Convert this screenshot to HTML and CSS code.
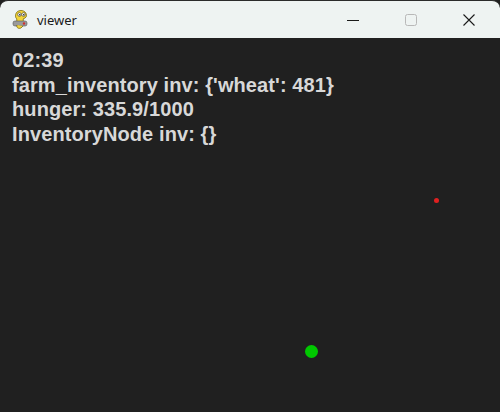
FILE: index.html
```html
<!DOCTYPE html>
<html>
<head>
<meta charset="utf-8">
<link rel="stylesheet" href="styles.css">
</head>
<body>
<div class="window">
  <div class="titlebar">
    <svg class="appicon" width="18" height="20" viewBox="0 0 18 20">
      <path d="M6 2 C8 0 12 0 14 2 C16 4 16 7 14 8 L12 9 C13 10 12 12 10 12 L8 12 C6 12 5 10 6 9 C4 8 4 4 6 2 Z" fill="#f2d43a" stroke="#7a6a10" stroke-width="0.8"/>
      <circle cx="8.5" cy="4.5" r="1.8" fill="#fff" stroke="#333" stroke-width="0.6"/>
      <circle cx="12.5" cy="4.5" r="1.8" fill="#fff" stroke="#333" stroke-width="0.6"/>
      <circle cx="8.8" cy="4.8" r="0.7" fill="#000"/>
      <circle cx="12.8" cy="4.8" r="0.7" fill="#000"/>
      <rect x="2" y="11" width="14" height="5" rx="2" fill="#9a9a9a" stroke="#555" stroke-width="0.6"/>
      <circle cx="13" cy="13.5" r="1.2" fill="#d03030"/>
      <path d="M6 15 C5 18 8 19 10 18 L12 16" fill="#f2d43a" stroke="#7a6a10" stroke-width="0.8"/>
    </svg>
    <span class="title">viewer</span>
    <div class="controls">
      <span class="ctl"><svg width="12" height="12" viewBox="0 0 12 12"><path d="M0 6.5 H12" stroke="#1a1a1a" stroke-width="1"/></svg></span>
      <span class="ctl"><svg width="12" height="12" viewBox="0 0 12 12"><rect x="0.5" y="0.5" width="11" height="11" rx="2" fill="none" stroke="#b8b8b8" stroke-width="1"/></svg></span>
      <span class="ctl"><svg width="12" height="12" viewBox="0 0 12 12"><path d="M0.5 0.5 L11.5 11.5 M11.5 0.5 L0.5 11.5" stroke="#1a1a1a" stroke-width="1.1"/></svg></span>
    </div>
  </div>
  <div class="canvas">
    <div class="hud">
      <div class="line">02:39</div>
      <div class="line">farm_inventory inv: {'wheat': 481}</div>
      <div class="line">hunger: 335.9/1000</div>
      <div class="line">InventoryNode inv: {}</div>
    </div>
    <span class="dot dot-red"></span>
    <span class="dot dot-green"></span>
  </div>
</div>
</body>
</html>
```
FILE: styles.css
```css
html, body {
  margin: 0;
  padding: 0;
  background: #202020;
}
.window {
  width: 500px;
  height: 412px;
  display: flex;
  flex-direction: column;
  background: #202020;
  overflow: hidden;
}
.titlebar {
  height: 38px;
  flex: none;
  background: #eef3f2;
  border-top: 1px solid #2b2b2b;
  border-radius: 8px 8px 0 0;
  box-sizing: border-box;
  display: flex;
  align-items: center;
  padding-left: 11px;
}
.appicon {
  flex: none;
  margin-top: 1px;
}
.title {
  margin-left: 8px;
  font-family: "Noto Sans", "Open Sans", sans-serif;
  font-size: 13px;
  color: #1a1a1a;
  margin-top: 1px;
}
.controls {
  margin-left: auto;
  margin-right: 2px;
  display: flex;
  height: 100%;
}
.ctl {
  width: 58px;
  display: flex;
  align-items: center;
  justify-content: center;
  height: 100%;
}
.canvas {
  position: relative;
  flex: 1;
  background: #202020;
}
.hud {
  padding: 10px 0 0 12px;
  font-family: "Liberation Sans", Arial, sans-serif;
  font-weight: bold;
  font-size: 20px;
  letter-spacing: 0.1px;
  line-height: 24.5px;
  color: #d8d8d8;
}
.line {
  white-space: pre;
}
.dot {
  position: absolute;
  border-radius: 50%;
}
.dot-red {
  left: 434px;
  top: 159.5px;
  width: 5px;
  height: 5px;
  background: #e02020;
}
.dot-green {
  left: 305px;
  top: 307px;
  width: 13px;
  height: 13px;
  background: #00c800;
}
```
